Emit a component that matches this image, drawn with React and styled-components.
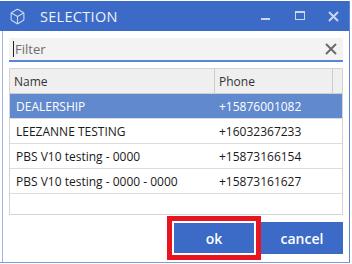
import React from 'react';
import styled, { createGlobalStyle } from 'styled-components';

const GlobalStyle = createGlobalStyle`
  html, body {
    margin: 0;
    padding: 0;
    background: #ffffff;
  }
  body {
    font-family: "Open Sans", "Noto Sans", sans-serif;
    width: 352px;
    height: 264px;
    overflow: hidden;
  }
  *, *::before, *::after {
    box-sizing: border-box;
  }
`;

const rows = [
  { name: 'DEALERSHIP', phone: '+15876001082' },
  { name: 'LEEZANNE TESTING', phone: '+16032367233' },
  { name: 'PBS V10 testing - 0000', phone: '+15873166154' },
  { name: 'PBS V10 testing - 0000 - 0000', phone: '+15873161627' },
];

const App = () => {
  return (
    <>
      <GlobalStyle />
      <Window>
        <TitleBar>
          <TitleIcon viewBox="0 0 24 24">
            <path d="M21 8a2 2 0 0 0-1-1.73l-7-4a2 2 0 0 0-2 0l-7 4A2 2 0 0 0 3 8v8a2 2 0 0 0 1 1.73l7 4a2 2 0 0 0 2 0l7-4A2 2 0 0 0 21 16Z" />
            <path d="m3.3 7 8.7 5 8.7-5" />
            <path d="M12 22V12" />
          </TitleIcon>
          <Title>SELECTION</Title>
          <Controls>
            <CtrlButton>
              <svg width="10" height="10" viewBox="0 0 10 10">
                <rect x="0" y="7" width="9" height="2" fill="#c9d6f1" />
              </svg>
            </CtrlButton>
            <CtrlButton>
              <svg width="10" height="10" viewBox="0 0 10 10">
                <rect x="0.5" y="0.5" width="9" height="8" fill="none" stroke="#c9d6f1" strokeWidth="1" />
                <rect x="0" y="0" width="10" height="2" fill="#c9d6f1" />
              </svg>
            </CtrlButton>
            <CtrlButton>
              <svg width="11" height="11" viewBox="0 0 11 11">
                <path d="M1 1L10 10M10 1L1 10" stroke="#c9d6f1" strokeWidth="2" />
              </svg>
            </CtrlButton>
          </Controls>
        </TitleBar>

        <Body>
          <FilterBox>
            <Caret />
            <FilterText>Filter</FilterText>
            <ClearIcon viewBox="0 0 12 12">
              <path d="M1 1L11 11M11 1L1 11" stroke="#6b6b6b" strokeWidth="2" />
            </ClearIcon>
          </FilterBox>

          <Table>
            <HeaderRow>
              <HeadCell $w={205}>Name</HeadCell>
              <HeadCell $w={118}>Phone</HeadCell>
              <Gutter />
            </HeaderRow>
            {rows.map((r, i) => (
              <Row key={r.phone} $selected={i === 0}>
                <Cell $w={205}>{r.name}</Cell>
                <Cell $w={118}>{r.phone}</Cell>
              </Row>
            ))}
          </Table>

          <Footer>
            <OkButton>ok</OkButton>
            <Button>cancel</Button>
          </Footer>
        </Body>
      </Window>
    </>
  );
};

export default App;

const Window = styled.div`
  width: 350px;
  height: 262px;
  margin-top: 1px;
  border-right: 1px solid #5f86d2;
  border-bottom: 1px solid #7d9bd9;
  display: flex;
  flex-direction: column;
`;

const TitleBar = styled.div`
  height: 30px;
  background: #3b6bc6;
  display: flex;
  align-items: center;
  padding-left: 9px;
`;

const TitleIcon = styled.svg`
  width: 17px;
  height: 17px;
  fill: none;
  stroke: #c9d6f1;
  stroke-width: 1.6;
  stroke-linejoin: round;
  stroke-linecap: round;
`;

const Title = styled.div`
  margin-left: 14px;
  color: #eef2fb;
  font-size: 14.5px;
  letter-spacing: 0.3px;
  flex: 1;
`;

const Controls = styled.div`
  display: flex;
  align-items: center;
  height: 100%;
`;

const CtrlButton = styled.div`
  width: 34px;
  height: 100%;
  display: flex;
  align-items: center;
  justify-content: center;
  &:last-child {
    width: 32px;
  }
`;

const Body = styled.div`
  flex: 1;
  margin-left: 2px;
  border-left: 1px solid #9fb5e3;
  padding: 7px 6px 0 6px;
  display: flex;
  flex-direction: column;
`;

const FilterBox = styled.div`
  height: 24px;
  background: #f3f3f3;
  border-bottom: 2px solid #5b87d0;
  display: flex;
  align-items: center;
  padding: 0 6px 0 4px;
`;

const Caret = styled.div`
  width: 1px;
  height: 16px;
  background: #222;
`;

const FilterText = styled.div`
  flex: 1;
  margin-left: 1px;
  color: #6d6d6d;
  font-size: 13px;
`;

const ClearIcon = styled.svg`
  width: 12px;
  height: 12px;
`;

const Table = styled.div`
  margin-top: 6px;
  height: 147px;
  border: 1px solid #d4d4d4;
  display: flex;
  flex-direction: column;
`;

const HeaderRow = styled.div`
  height: 25px;
  flex-shrink: 0;
  background: #efefef;
  border-bottom: 1px solid #cfcfcf;
  display: flex;
`;

const HeadCell = styled.div`
  width: ${(p) => p.$w}px;
  border-right: 1px solid #cdcdcd;
  padding-left: 4px;
  display: flex;
  align-items: center;
  font-size: 12px;
  color: #333;
`;

const Gutter = styled.div`
  flex: 1;
`;

const Row = styled.div`
  height: 25px;
  flex-shrink: 0;
  border-bottom: 1px solid #dcdcdc;
  display: flex;
  background: ${(p) => (p.$selected ? '#6189ce' : '#ffffff')};
  color: ${(p) => (p.$selected ? '#ffffff' : '#1a1a1a')};
`;

const Cell = styled.div`
  width: ${(p) => p.$w}px;
  padding-left: ${(p) => (p.$w > 200 ? 6 : 4)}px;
  display: flex;
  align-items: center;
  font-size: 12px;
  white-space: nowrap;
`;

const Footer = styled.div`
  margin-top: 7px;
  display: flex;
  justify-content: flex-end;
  gap: 6px;
`;

const Button = styled.button`
  width: 82px;
  height: 32px;
  border: none;
  background: #3b6bc6;
  color: #ffffff;
  font-family: "Open Sans", sans-serif;
  font-weight: 600;
  font-size: 14px;
  padding: 0;
`;

const OkButton = styled(Button)`
  box-shadow: inset 0 0 0 1px #ffffff;
  outline: 5px solid #e8141f;
  outline-offset: 1px;
`;
